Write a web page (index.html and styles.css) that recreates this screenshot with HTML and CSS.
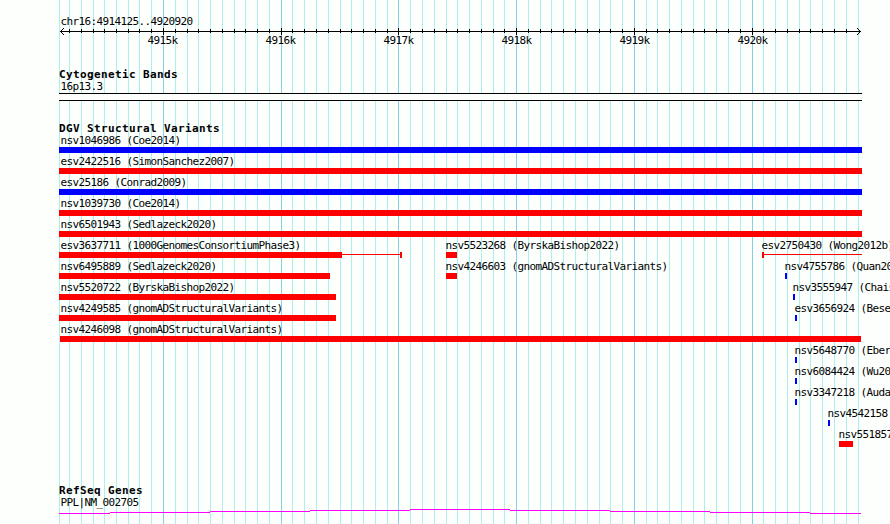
FILE: index.html
```
<!DOCTYPE html>
<html lang="en">
<head>
<meta charset="utf-8">
<title>chr16:4914125..4920920</title>
<link rel="stylesheet" href="styles.css">
</head>
<body>
<main class="browser">
<svg class="gridlines" width="890" height="524" aria-hidden="true"></svg>
<section class="ruler">
<div class="label">chr16:4914125..4920920</div>
<svg class="axis" width="803" height="8" viewBox="59 28 803 8"></svg>
<div class="scale label"><span>4915k</span><span>4916k</span><span>4917k</span><span>4918k</span><span>4919k</span><span>4920k</span></div>
</section>
<section class="bands">
<h2>Cytogenetic Bands</h2>
<div class="label">16p13.3</div>
<div class="band"></div>
</section>
<section class="variants">
<h2>DGV Structural Variants</h2>
<div class="tracks"></div>
</section>
<section class="genes">
<h2>RefSeq Genes</h2>
<div class="label">PPL|NM_002705</div>
<svg class="intron" width="803" height="6" viewBox="59 509 803 6"><path d="M59 513.5H110M110 512.5H210M210 511.5H310M310 510.5H410M410 509.5H510M510 510.5H610M610 511.5H710M710 512.5H810M810 513.5H861"/></svg>
</section>
</main>
<script src="tracks.js"></script>
</body>
</html>
```
FILE: styles.css
```
body {
  margin: 0;
  background: #fdfffc;
  color: #000;
  overflow: hidden;
}
.browser {
  position: relative;
  box-sizing: border-box;
  width: 890px;
  height: 524px;
  padding: 15px 0 0 59px;
  overflow: hidden;
  font-family: "DejaVu Sans Mono", monospace;
}
.gridlines {
  position: absolute;
  inset: 0;
  z-index: -1;
}
.minor { stroke: #afeeee; }
.major { stroke: #87ceeb; }
svg { display: block; shape-rendering: crispEdges; fill: none; }
.label {
  font-size: 11px;
  line-height: 13px;
  height: 13px;
  letter-spacing: -0.622px;
  white-space: pre;
  padding-left: 1.5px;
}
h2 {
  margin: 0;
  font-size: 11px;
  line-height: 13px;
  height: 12px;
  font-weight: bold;
  letter-spacing: 0.378px;
  white-space: pre;
}
.ruler { height: 53px; }
.axis { stroke: #000; }
.scale {
  display: grid;
  grid-template-columns: repeat(6, 118px);
  padding-left: 88.5px;
  margin-top: -2px;
}
.bands { height: 54px; }
.band {
  width: 803px;
  height: 6px;
  border-top: 1px solid #000;
  border-bottom: 1px solid #000;
  background: #fdfffc;
}
.variants { height: 362px; }
.row {
  display: grid;
  height: 21px;
}
.feature {
  grid-area: 1 / 1;
  margin-left: var(--x);
}
.feature .label {
  padding-left: 0;
  text-indent: var(--indent);
}
.glyph { display: flex; }
.block { height: 6px; flex: none; }
.red { background: #f00; }
.blue { background: #00f; }
.line { height: 1px; margin-top: 2px; background: #f00; flex: none; }
.intron { stroke: #f0f; }
```
FILE: tracks.js
```
const NS = "http://www.w3.org/2000/svg";
const LEFT = 59;
const grid = [59,69,81,93,104,116,128,139,151,163,175,187,198,210,222,234,245,257,269,281,292,304,316,328,340,351,363,375,387,398,410,422,434,446,457,469,481,493,504,516,528,540,551,563,575,587,599,610,622,634,646,657,669,681,693,704,716,728,740,752,763,775,787,799,810,822,834,846,858];
const majors = [163,281,398,516,634,752];

function stroke(svg, d, cls) {
  const p = document.createElementNS(NS, "path");
  p.setAttribute("d", d);
  if (cls) p.setAttribute("class", cls);
  svg.append(p);
}

const backdrop = document.querySelector(".gridlines");
const axis = document.querySelector(".axis");
stroke(axis, "M60 31.5H861");
stroke(axis, "M60.5 31V32M61.5 30V31M61.5 32V33M62.5 29V30M62.5 33V34M63.5 28V29M63.5 34V35");
stroke(axis, "M860.5 31V32M859.5 30V31M859.5 32V33M858.5 29V30M858.5 33V34M857.5 28V29M857.5 34V35");
for (const x of grid) {
  const major = majors.includes(x);
  stroke(backdrop, `M${x + 0.5} 0V524`, major ? "major" : "minor");
  if (x > 60 && x < 857) stroke(axis, major ? `M${x + 0.5} 28V35` : `M${x + 0.5} 29V33`);
}

// Each feature: label, label x, [start, end, colour] segments ("line" draws a connector).
const rows = [
  [["nsv1046986 (Coe2014)", 60.5, [[59,862,"blue"]]]],
  [["esv2422516 (SimonSanchez2007)", 60.5, [[59,862,"red"]]]],
  [["esv25186 (Conrad2009)", 60.5, [[59,862,"blue"]]]],
  [["nsv1039730 (Coe2014)", 60.5, [[59,862,"red"]]]],
  [["nsv6501943 (Sedlazeck2020)", 60.5, [[59,862,"red"]]]],
  [["esv3637711 (1000GenomesConsortiumPhase3)", 60.5, [[59,342,"red"],[342,400,"line"],[400,402,"red"]]],
   ["nsv5523268 (ByrskaBishop2022)", 445.5, [[446,457,"red"]]],
   ["esv2750430 (Wong2012b)", 761.5, [[762,764,"red"],[764,862,"line"]]]],
  [["nsv6495889 (Sedlazeck2020)", 60.5, [[59,330,"red"]]],
   ["nsv4246603 (gnomADStructuralVariants)", 445.5, [[446,457,"red"]]],
   ["nsv4755786 (Quan2020)", 784.5, [[785,787,"blue"]]]],
  [["nsv5520722 (ByrskaBishop2022)", 60.5, [[59,336,"red"]]],
   ["nsv3555947 (Chaisson2019)", 792.5, [[793,795,"blue"]]]],
  [["nsv4249585 (gnomADStructuralVariants)", 60.5, [[59,336,"red"]]],
   ["esv3656924 (Besenbacher2015)", 794.5, [[795,797,"blue"]]]],
  [["nsv4246098 (gnomADStructuralVariants)", 60.5, [[60,861,"red"]]]],
  [["nsv5648770 (Ebert2021)", 794.5, [[795,797,"blue"]]]],
  [["nsv6084424 (Wu2021)", 794.5, [[795,797,"blue"]]]],
  [["nsv3347218 (Audano2019)", 794.5, [[795,797,"blue"]]]],
  [["nsv4542158", 827.5, [[828,830,"blue"]]]],
  [["nsv5518570", 838.5, [[839,853,"red"]]]]
];

function box(cls, parent) {
  const el = document.createElement("div");
  el.className = cls;
  parent.append(el);
  return el;
}

const tracks = document.querySelector(".tracks");
for (const features of rows) {
  const row = box("row", tracks);
  for (const [text, labelX, segments] of features) {
    const start = segments[0][0];
    const feature = box("feature", row);
    feature.style.setProperty("--x", `${start - LEFT}px`);
    feature.style.setProperty("--indent", `${labelX - start}px`);
    box("label", feature).textContent = text;
    const glyph = box("glyph", feature);
    for (const [from, to, kind] of segments) {
      const seg = box(kind === "line" ? "line" : `block ${kind}`, glyph);
      seg.style.width = `${to - from}px`;
    }
  }
}
```
